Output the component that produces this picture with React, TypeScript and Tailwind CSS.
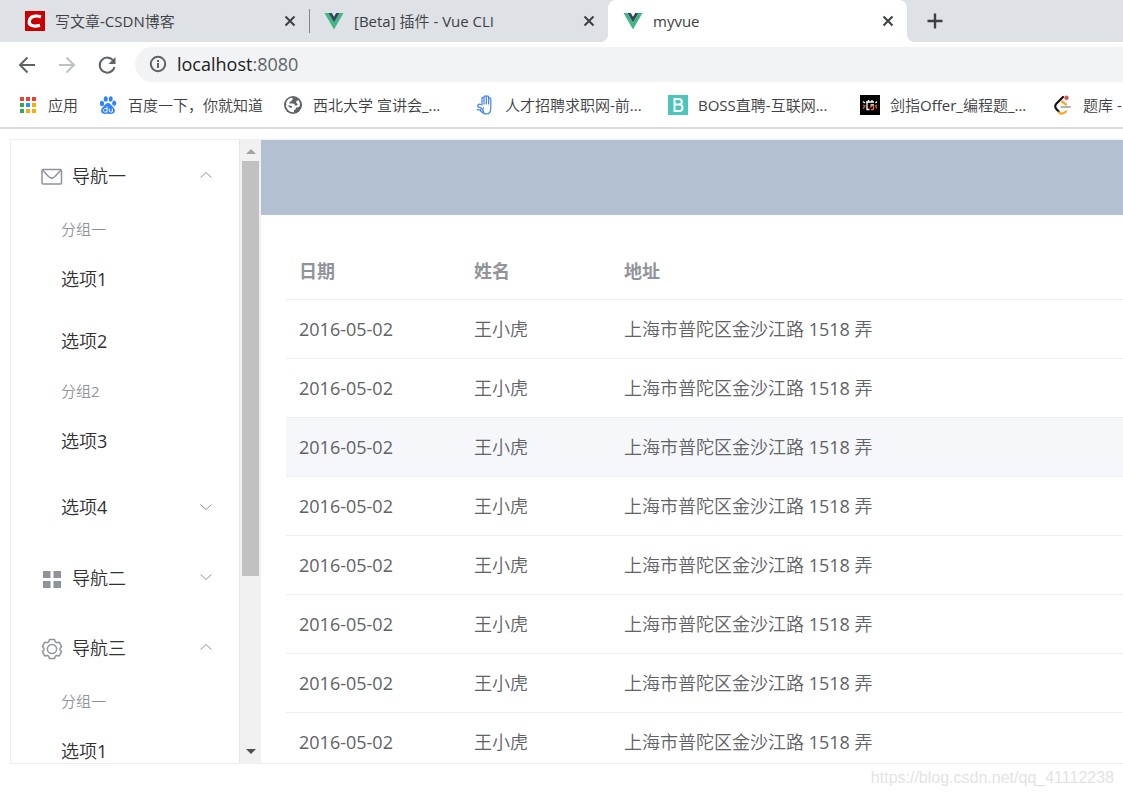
import { useState } from "react";

const tabs = [
  { title: "写文章-CSDN博客", icon: "csdn" },
  { title: "[Beta] 插件 - Vue CLI", icon: "vue" },
  { title: "myvue", icon: "vue" },
];

const bookmarks = [
  { label: "应用", icon: "apps", width: "w-20" },
  { label: "百度一下，你就知道", icon: "baidu", width: "w-[185px]" },
  { label: "西北大学 宣讲会_...", icon: "globe", width: "w-48" },
  { label: "人才招聘求职网-前...", icon: "hand", width: "w-[193px]" },
  { label: "BOSS直聘-互联网...", icon: "boss", width: "w-48" },
  { label: "剑指Offer_编程题_...", icon: "nowcoder", width: "w-[193px]" },
  { label: "题库 -", icon: "leetcode", width: "w-auto" },
];

const menus = [
  {
    label: "导航一",
    icon: "message",
    groups: [
      { title: "分组一", items: ["选项1", "选项2"] },
      { title: "分组2", items: ["选项3"] },
    ],
    more: "选项4",
  },
  { label: "导航二", icon: "menu", groups: [{ title: "分组一", items: ["选项1"] }] },
  { label: "导航三", icon: "setting", groups: [{ title: "分组一", items: ["选项1"] }] },
];

const rows = Array.from({ length: 8 }, (_, i) => ({
  id: i,
  date: "2016-05-02",
  name: "王小虎",
  address: "上海市普陀区金沙江路 1518 弄",
}));

function SiteIcon({ name }: { name: string }) {
  const cls = "size-5 shrink-0";
  switch (name) {
    case "csdn":
      return (
        <svg className={cls} viewBox="0 0 20 20">
          <path fill="#c80000" d="M0 0h20v20H0z" />
          <path d="M16 6C13 4.700 6.500 4 4.700 8.500 2.800 13.800 6.500 16.300 15 14.400" fill="none" stroke="#fff" strokeWidth="3.200" />
        </svg>
      );
    case "vue":
      return (
        <svg className={cls} viewBox="0 0 20 20">
          <path fill="#41b883" d="M.5 2h4L10 11.500 15.500 2h4L10 18.500z" />
          <path fill="#34495e" d="M4.500 2h3.300L10 5.800 12.200 2h3.300L10 11.500z" />
        </svg>
      );
    case "apps":
      return (
        <svg className={cls} viewBox="0 0 20 20">
          <path fill="#ea4335" d="M2 2h4v4H2zM8 2h4v4H8zM14 2h4v4h-4z" />
          <path fill="#34a853" d="M2 8h4v4H2zM2 14h4v4H2z" />
          <path fill="#2196f3" d="M8 8h4v4H8z" />
          <path fill="#fbab05" d="M14 8h4v4h-4zM8 14h4v4H8zM14 14h4v4h-4z" />
        </svg>
      );
    case "baidu":
      return (
        <svg className={cls} viewBox="0 0 20 20" fill="#2e82ff">
          <ellipse cx="4" cy="8.500" rx="2.100" ry="2.700" transform="rotate(-12 4 8.500)" />
          <ellipse cx="7.700" cy="4" rx="2" ry="2.800" />
          <ellipse cx="12.700" cy="4" rx="2" ry="2.800" transform="rotate(10 12.700 4)" />
          <ellipse cx="16.200" cy="8.300" rx="2" ry="2.700" />
          <path d="M10 8c2.200 0 3 2 4.500 3.500s2.800 2.800 2.300 5-2.300 2.700-6.800 2.300c-4.500.4-6.300-.1-6.800-2.300s.8-3.500 2.300-5S7.800 8 10 8z" />
          <path d="M9 11.500V17H7.200c-2.400 0-2.400-3.500 0-3.500H9M11.300 13.500v2.300c0 .8.400 1.200 1.200 1.200h1.800v-3.500" fill="none" stroke="#fff" />
        </svg>
      );
    case "globe":
      return (
        <svg className={cls} viewBox="0 0 20 20">
          <circle cx="10" cy="10" r="9" fill="#5f6368" />
          <path fill="#fff" d="M9 2.800c1.300 1 .7 2.600-.8 2.900-.7 1.400-1.800 1.300-2.200 2.800h4c1.200 0 1.800.8 1.800 2h1.400c1.200 0 1.700-.8 1.300-1.800-1.500-.2-1.800-1.500-.8-2.600l1.700-1A7 7 0 0 1 16.800 11c-1 1.500-2.600 1.500-3.800 1.500 0 2-1 2.400-2 2.500v2.200A7.300 7.300 0 0 1 2.900 9l4.200 3.700h2c0-1.400-.6-2.200-1.900-2.200H4.500L3 8.200A7 7 0 0 1 9 2.800z" />
        </svg>
      );
    case "hand":
      return (
        <svg className={cls} viewBox="0 0 20 20" fill="none" stroke="#3f83f0" strokeWidth="1.200" strokeLinecap="round" strokeLinejoin="round">
          <path d="M7 10V3.500c0-1.500 2-1.500 2 0V9 2c0-1.500 2.300-1.500 2.300 0v7-7c0-1.500 2.300-1.500 2.300 0v7-5c0-1.500 2.200-1.500 2.200 0v9c0 3.500-1.500 6-4.500 6-3 0-4.300-1.500-6-3.500" />
          <path d="M6 9.500c-2.500-1-4.500 1.500-2.500 2.600 1.600.9 3.500-.2 2.700 1.700-.6 1.300-2.500 1.500-4 .7M8.500 13c-1 1-1 2.500 0 3.500" />
        </svg>
      );
    case "boss":
      return (
        <svg className={cls} viewBox="0 0 20 20">
          <path fill="#4cc5bb" d="M0 0h20v20H0z" />
          <path d="M6.500 4h4.300c4 0 4 5.500 0 5.500H6.500zm0 5.500h4.800c4.300 0 4.300 6.500 0 6.500H6.500z" fill="none" stroke="#fff" strokeWidth="2" />
        </svg>
      );
    case "nowcoder":
      return (
        <svg className={cls} viewBox="0 0 20 20">
          <path d="M0 0h20v20H0z" />
          <path d="M7 7v7.500h2.500M6 7h8M8.500 5v2M12 5v2M10.500 10H14M3 6.500l2 1.500M17 6.500L15.500 8" fill="none" stroke="#fff" strokeWidth="1.300" />
          <path d="M13.500 10v4.500H11M10 12.500l2-1.500M3 10l2 1-2 2.500M17 10l-1.500 1 1.500 2.500" fill="none" stroke="#e8603c" strokeWidth="1.300" />
        </svg>
      );
    default:
      return (
        <svg className={cls} viewBox="0 0 20 20" fill="none" strokeWidth="2.200" strokeLinecap="round">
          <path d="M10 2L3.500 8.500c-2 2-1.500 4.500.5 6.300l2 2" stroke="#111" />
          <path d="M9 6.500l4 3M6 17.500c2.500 1.800 4.500 1.500 7-1" stroke="#f9a825" />
          <path d="M8.500 12H17" stroke="#b3b3b3" />
          <circle cx="13.500" cy="2.800" r="2.200" fill="#e05252" />
        </svg>
      );
  }
}

function Close() {
  return (
    <button type="button" aria-label="关闭标签页" className="shrink-0">
      <svg className="size-3" viewBox="0 0 12 12" stroke="#3c4043" strokeWidth="2">
        <path d="M1.500 1.500l9 9M10.500 1.500l-9 9" />
      </svg>
    </button>
  );
}

function TabStrip() {
  return (
    <div className="flex h-[42px] bg-[#dee1e6] text-[15px] text-[#3c4043]">
      {tabs.map((t, i) => {
        const active = i === 2;
        return (
          <div
            key={t.title}
            className={
              active
                ? "relative flex w-[299px] items-center rounded-t-lg bg-white pr-[13px] pl-[15px]"
                : "relative flex w-[299px] items-center pr-[13px] pl-[15px] first:w-[309px] first:pl-[25px]"
            }
          >
            <SiteIcon name={t.icon} />
            <span className="ml-2.5 grow truncate">{t.title}</span>
            <Close />
            {i === 0 && <span className="absolute -right-px h-6 w-px bg-[#80868b]" />}
            {active && (
              <>
                <span className="absolute bottom-0 -left-2 size-2 bg-[radial-gradient(circle_at_0_0,#dee1e6_8px,#fff_8px)]" />
                <span className="absolute -right-2 bottom-0 size-2 bg-[radial-gradient(circle_at_100%_0,#dee1e6_8px,#fff_8px)]" />
              </>
            )}
          </div>
        );
      })}
      <button type="button" aria-label="新标签页" className="ml-5">
        <svg className="size-4" viewBox="0 0 16 16" stroke="#3c4043" strokeWidth="2.400">
          <path d="M8 .5v15M.5 8h15" />
        </svg>
      </button>
    </div>
  );
}

function Toolbar() {
  return (
    <div className="flex h-[45px] items-center pl-[17px]">
      <div className="flex w-[118px] gap-5">
        <button type="button" aria-label="后退">
          <svg className="size-5" viewBox="0 0 20 20" fill="none" stroke="#5f6368" strokeWidth="2">
            <path d="M18 10H3.500M10.500 2.500L3 10l7.500 7.500" />
          </svg>
        </button>
        <button type="button" aria-label="前进">
          <svg className="size-5" viewBox="0 0 20 20" fill="none" stroke="#bdc1c6" strokeWidth="2">
            <path d="M2 10h14.500M9.500 2.500L17 10l-7.500 7.500" />
          </svg>
        </button>
        <button type="button" aria-label="刷新">
          <svg className="size-5" viewBox="0 0 20 20">
            <path d="M16.500 6A7.500 7.500 0 1 0 17.500 12" fill="none" stroke="#5f6368" strokeWidth="2" />
            <path fill="#5f6368" d="M18.500 2v7h-7z" />
          </svg>
        </button>
      </div>
      <div className="flex h-[35px] grow items-center rounded-l-full bg-[#f1f3f4] pb-0.5 pl-3.5">
        <svg className="size-[18px]" viewBox="0 0 18 18" fill="none" stroke="#5f6368" strokeWidth="2">
          <circle cx="9" cy="9" r="7.200" />
          <path d="M9 8v5M9 5v2" />
        </svg>
        <p className="ml-2.5 text-lg text-[#5f6368]">
          <span className="text-[#202124]">localhost</span>:8080
        </p>
      </div>
    </div>
  );
}

function Bookmarks() {
  return (
    <nav className="flex h-[42px] overflow-hidden border-b-2 border-[#dadce0] pb-1 pl-[18px] text-[15px] text-[#3c4043]">
      {bookmarks.map((b) => (
        <a key={b.label} href="#" className={`flex shrink-0 items-center gap-2.5 whitespace-nowrap ${b.width}`}>
          <SiteIcon name={b.icon} />
          {b.label}
        </a>
      ))}
    </nav>
  );
}

function Chevron({ open }: { open: boolean }) {
  return (
    <svg className={open ? "h-3 w-3.5" : "h-3 w-3.5 rotate-180"} viewBox="0 0 14 12" fill="none" stroke="#909399">
      <path d="M1.500 8.500L7 3.500l5.500 5" />
    </svg>
  );
}

function NavIcon({ name }: { name: string }) {
  const cls = "mt-1 size-[22px]";
  if (name === "message") {
    return (
      <svg className={cls} viewBox="0 0 22 22" fill="none" stroke="#909399" strokeWidth="1.500">
        <rect x="1" y="3.500" width="19.500" height="14.500" rx="1" />
        <path d="M1.500 4l6 6.500c2 2 4.500 2 6.500 0l6-6.500" />
      </svg>
    );
  }
  if (name === "menu") {
    return (
      <svg className={cls} viewBox="0 0 22 22" fill="#909399">
        <path d="M2 3h7.500v7H2zM12.500 3H20v7h-7.500zM2 13h7.500v7H2zM12.500 13H20v7h-7.500z" />
      </svg>
    );
  }
  return (
    <svg className={cls} viewBox="0 0 22 22" fill="none" stroke="#909399" strokeWidth="1.500" strokeLinejoin="round">
      <circle cx="11" cy="11" r="4.600" />
      <path d="M8.500 1.500h5l.8 2.400 1.400.8 2.500-.5 2.400 4.200-1.600 1.900v1.500l1.600 1.900-2.400 4.200-2.500-.5-1.400.8-.8 2.300h-5l-.8-2.300-1.400-.8-2.500.5-2.400-4.200L3 11.800v-1.500L1.400 8.400l2.400-4.200 2.500.5 1.400-.8z" />
    </svg>
  );
}

function NavTitle({ icon, label, open, onClick }: { icon: string; label: string; open: boolean; onClick: () => void }) {
  return (
    <button type="button" aria-expanded={open} onClick={onClick} className="flex h-[70px] w-full items-center pr-[26px] pl-[30px]">
      <NavIcon name={icon} />
      <span className="mt-0.5 mr-auto ml-[9px]">{label}</span>
      <Chevron open={open} />
    </button>
  );
}

function Group({ title, items }: { title: string; items: string[] }) {
  return (
    <div>
      <h3 className="h-[38px] pt-2 pl-[50px] text-[15px] leading-[23px] text-[#909399]">{title}</h3>
      {items.map((item) => (
        <a key={item} href="#" className="flex h-[62px] items-center pl-[50px]">
          {item}
        </a>
      ))}
    </div>
  );
}

function Sidebar() {
  const [open, setOpen] = useState(["导航一", "导航三"]);
  const toggle = (label: string) =>
    setOpen(open.includes(label) ? open.filter((l) => l !== label) : [...open, label]);

  return (
    <aside className="flex w-[250px] shrink-0">
      <div className="grow overflow-hidden border-r border-[#e6e6e6] text-lg text-[#303133]">
        {menus.map((m) => (
          <div key={m.label}>
            <NavTitle icon={m.icon} label={m.label} open={open.includes(m.label)} onClick={() => toggle(m.label)} />
            {open.includes(m.label) && (
              <>
                {m.groups.map((g) => (
                  <Group key={g.title} title={g.title} items={g.items} />
                ))}
                {m.more && (
                  <button type="button" className="flex h-[70px] w-full items-center justify-between pr-[26px] pl-[50px]">
                    {m.more}
                    <Chevron open={false} />
                  </button>
                )}
              </>
            )}
          </div>
        ))}
      </div>
      {/* Scrollbar */}
      <div className="flex w-[21px] flex-col items-center bg-[#f1f1f1]">
        <svg className="h-[21px] w-2.5 shrink-0" viewBox="0 0 10 21" fill="#a3a3a3">
          <path d="M0 14h10L5 9z" />
        </svg>
        <div className="h-2/3 w-[17px] bg-[#c1c1c1]" />
        <svg className="mt-auto h-[21px] w-2.5 shrink-0" viewBox="0 0 10 21" fill="#505050">
          <path d="M0 7h10l-5 5z" />
        </svg>
      </div>
    </aside>
  );
}

function UserTable() {
  return (
    <table className="w-full table-fixed text-left text-lg text-[#606266]">
      <thead className="font-['Open_Sans','Noto_Sans_CJK_SC',sans-serif] text-[#909399]">
        <tr className="h-[59px] border-b border-[#ebeef5]">
          <th className="w-[175px] pt-1 pl-[13px] font-bold">日期</th>
          <th className="w-[150px] pt-1 pl-[13px] font-bold">姓名</th>
          <th className="pt-1 pl-[13px] font-bold">地址</th>
        </tr>
      </thead>
      <tbody>
        {rows.map((r) => (
          <tr key={r.id} className="h-[59px] border-b border-[#ebeef5] nth-3:bg-[#f5f7fa]">
            <td className="pl-[13px]">{r.date}</td>
            <td className="pl-[13px]">{r.name}</td>
            <td className="pl-[13px]">{r.address}</td>
          </tr>
        ))}
      </tbody>
    </table>
  );
}

export default function App() {
  return (
    <div className="flex h-screen flex-col overflow-hidden bg-white font-['Open_Sans','Noto_Sans_CJK_SC_DemiLight','Noto_Sans_CJK_SC',sans-serif]">
      <header>
        <TabStrip />
        <Toolbar />
        <Bookmarks />
      </header>
      <div className="mt-2.5 ml-2.5 flex min-h-0 grow border border-r-0 border-[#eee]">
        <Sidebar />
        <div className="flex min-w-0 grow flex-col">
          <div className="h-[75px] shrink-0 bg-[#b3c0d1]" />
          <main className="min-h-0 overflow-hidden pt-[25px] pl-[25px]">
            <UserTable />
          </main>
        </div>
      </div>
      <footer className="flex h-[31px] shrink-0 items-center justify-end pr-[9px] pb-1 font-['Liberation_Sans',sans-serif] text-base text-[#e3e3e3]">
        https://blog.csdn.net/qq_41112238
      </footer>
    </div>
  );
}
